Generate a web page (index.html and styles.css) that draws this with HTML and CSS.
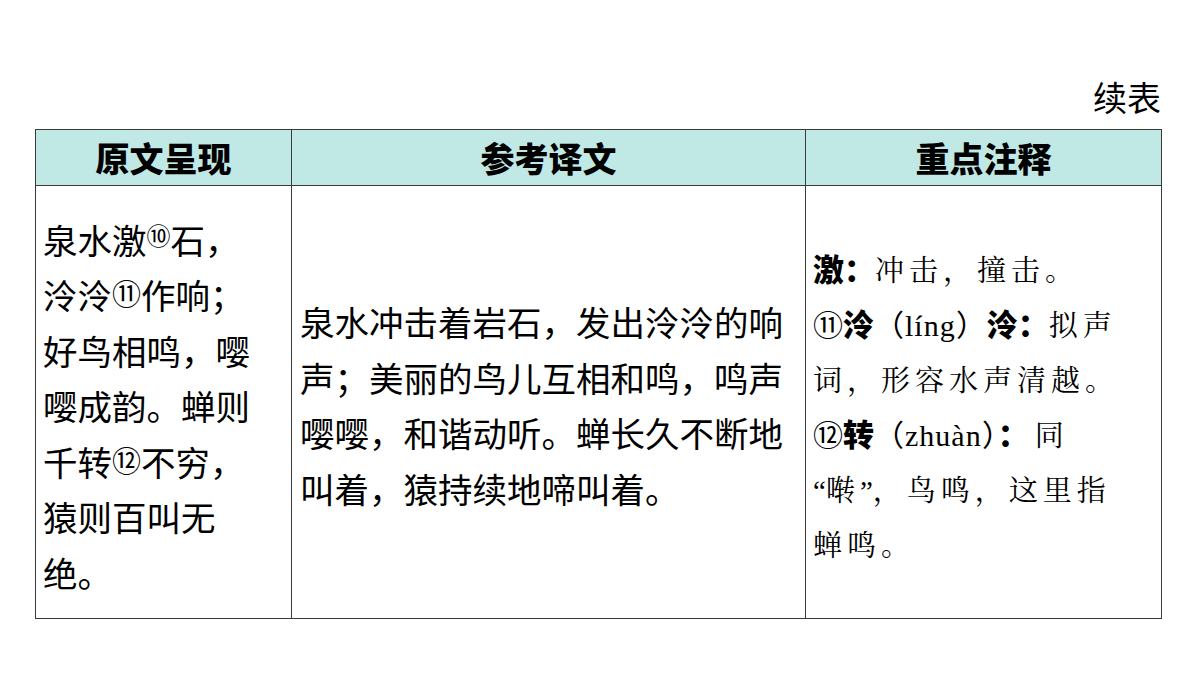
FILE: index.html
```html
<!DOCTYPE html>
<html lang="zh-CN">
<head>
<meta charset="utf-8">
<link rel="stylesheet" href="styles.css">
</head>
<body>
<div class="page">
  <div class="caption">续表</div>
  <table class="grid">
    <colgroup>
      <col class="c1"><col class="c2"><col class="c3">
    </colgroup>
    <thead>
      <tr><th>原文呈现</th><th>参考译文</th><th>重点注释</th></tr>
    </thead>
    <tbody>
      <tr>
        <td class="orig">泉水激<span class="sup">⑩</span>石，<br>泠泠<span class="num">⑪</span>作响；<br>好鸟相鸣，嘤<br>嘤成韵。蝉则<br>千转<span class="num">⑫</span>不穷，<br>猿则百叫无<br>绝。</td>
        <td class="trans">泉水冲击着岩石，发出泠泠的响<br>声；美丽的鸟儿互相和鸣，鸣声<br>嘤嘤，和谐动听。蝉长久不断地<br>叫着，猿持续地啼叫着。</td>
        <td class="note"><b>激：</b>冲击，撞击。<br><span class="cn">⑪</span><b>泠</b><span class="py">（líng）</span><b>泠：</b>拟声<br>词，形容水声清越。<br><span class="cn">⑫</span><b>转</b><span class="py">（zhuàn）</span><b class="colon">：</b>同<br><span class="q">“</span>啭<span class="q">”</span>，鸟鸣，这里指<br>蝉鸣。</td>
      </tr>
    </tbody>
  </table>
</div>
</body>
</html>
```
FILE: styles.css
```css
html, body {
  margin: 0;
  padding: 0;
  background: #ffffff;
}
.page {
  width: 1200px;
  height: 675px;
  padding: 74px 0 0 35px;
  box-sizing: border-box;
  font-family: "Noto Sans CJK SC", "Noto Sans", sans-serif;
  color: #000;
}
.caption {
  width: 1126px;
  text-align: right;
  font-size: 34px;
  line-height: 46px;
  height: 55px;
}
.grid {
  border-collapse: collapse;
  width: 1126px;
  table-layout: fixed;
}
.c1 { width: 256px; }
.c2 { width: 514px; }
.c3 { width: 356px; }
.grid th, .grid td {
  border: 1px solid #3a3a3a;
  padding: 0;
}
.grid th {
  background: #c0e9e6;
  height: 55px;
  font-size: 34px;
  font-weight: 900;
  text-align: center;
  vertical-align: middle;
  line-height: 40px;
}
.grid td {
  height: 424px;
  vertical-align: middle;
  text-align: left;
}
.grid td.orig {
  font-size: 34.5px;
  line-height: 55.5px;
  padding: 8px 0 0 7px;
}
.sup {
  font-family: "Liberation Serif", "Noto Sans CJK SC", serif;
  font-size: 24px;
  vertical-align: 9px;
  line-height: 0;
}
.num {
  font-family: "Liberation Serif", "Noto Sans CJK SC", serif;
  font-size: 29px;
  vertical-align: 4px;
  line-height: 0;
}
.grid td.trans {
  font-size: 34.5px;
  line-height: 55.5px;
  padding: 6px 0 0 8px;
}
.grid td.note {
  font-family: "AR PL UKai CN", "Noto Serif CJK SC", "Noto Sans CJK SC", serif;
  font-size: 29px;
  line-height: 55px;
  padding: 8px 0 0 7px;
  letter-spacing: 5px;
  font-weight: 400;
}
.note b, .note .py, .note .cn, .note .q {
  line-height: 1;
}
.note b {
  font-family: "Noto Sans CJK SC", sans-serif;
  font-weight: 900;
  font-size: 31px;
  letter-spacing: 0;
}
.note b.colon {
  letter-spacing: 6px;
}
.note .py {
  font-family: "Liberation Serif", serif;
  font-size: 30px;
  letter-spacing: 1px;
}
.note .cn {
  font-family: "Liberation Serif", "Noto Sans CJK SC", serif;
  font-size: 30px;
  letter-spacing: 0;
}
.note .q {
  font-family: "Liberation Serif", serif;
  letter-spacing: 0;
}
```
